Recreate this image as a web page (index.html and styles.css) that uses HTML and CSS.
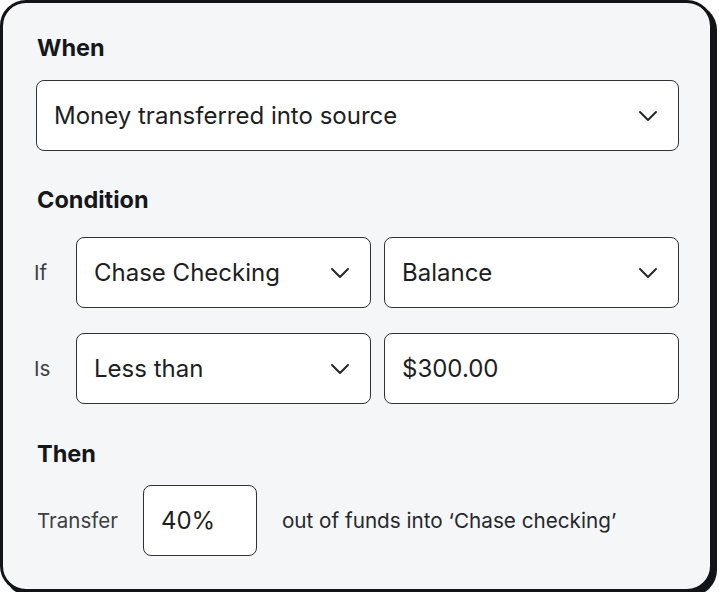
FILE: index.html
```html
<!DOCTYPE html>
<html>
<head>
<meta charset="utf-8">
<link rel="stylesheet" href="styles.css">
</head>
<body>
<div class="card">
  <h2 class="heading heading-when">When</h2>
  <div class="field field-wide">
    <span class="value">Money transferred into source</span>
    <svg class="chev" viewBox="0 0 20 12"><path d="M2 2l8 8 8-8"/></svg>
  </div>

  <h2 class="heading heading-cond">Condition</h2>
  <div class="cond-grid">
    <span class="label label-cond">If</span>
    <div class="field">
      <span class="value">Chase Checking</span>
      <svg class="chev" viewBox="0 0 20 12"><path d="M2 2l8 8 8-8"/></svg>
    </div>
    <div class="field">
      <span class="value">Balance</span>
      <svg class="chev" viewBox="0 0 20 12"><path d="M2 2l8 8 8-8"/></svg>
    </div>
    <span class="label label-cond">Is</span>
    <div class="field">
      <span class="value">Less than</span>
      <svg class="chev" viewBox="0 0 20 12"><path d="M2 2l8 8 8-8"/></svg>
    </div>
    <div class="field">
      <span class="value">$300.00</span>
    </div>
  </div>

  <h2 class="heading heading-then">Then</h2>
  <div class="then-row">
    <span class="label">Transfer</span>
    <div class="field field-small">
      <span class="value">40%</span>
    </div>
    <span class="desc">out of funds into ‘Chase checking’</span>
  </div>
</div>
</body>
</html>
```

FILE: styles.css
```css
* { box-sizing: border-box; }
html, body { margin: 0; padding: 0; background: #ffffff; }
body {
  font-family: Inter, "Noto Sans", "Liberation Sans", sans-serif;
  color: #1b1c20;
}
.card {
  width: 713px;
  height: 592px;
  background: #f5f6f8;
  border: 3px solid #121419;
  border-radius: 26px;
  box-shadow: 4px 4px 0 #121419;
  padding: 31px 0 0 33px;
}
.heading {
  margin: 0;
  font-size: 23.5px;
  line-height: 28px;
  font-weight: 700;
  color: #16171b;
  padding-left: 1px;
}
.heading-when { margin-bottom: 18px; }
.heading-cond { margin-top: 35px; margin-bottom: 23px; }
.heading-then { margin-top: 36px; margin-bottom: 17px; }

.field {
  height: 71px;
  background: #ffffff;
  border: 1.5px solid #2f3137;
  border-radius: 8px;
  display: flex;
  align-items: center;
  justify-content: space-between;
  padding: 0 20px 0 17px;
}
.field-wide { width: 643px; }
.value {
  font-size: 24px;
  color: #1d1e22;
}
.chev {
  width: 20px;
  height: 12px;
  fill: none;
  stroke: #24262b;
  stroke-width: 2;
  stroke-linecap: round;
  stroke-linejoin: round;
}
.cond-grid {
  width: 643px;
  display: grid;
  grid-template-columns: 27px 1fr 1fr;
  column-gap: 13px;
  row-gap: 25px;
  align-items: center;
}
.label {
  font-size: 20.5px;
  color: #3c3e44;
  padding-left: 1px;
}
.label-cond { margin-left: -3px; }
.then-row {
  display: flex;
  align-items: center;
}
.field-small {
  width: 114px;
  height: 71px;
  margin-left: 25px;
  margin-right: 25px;
}
.desc {
  font-size: 20.7px;
  color: #26272c;
}
```
